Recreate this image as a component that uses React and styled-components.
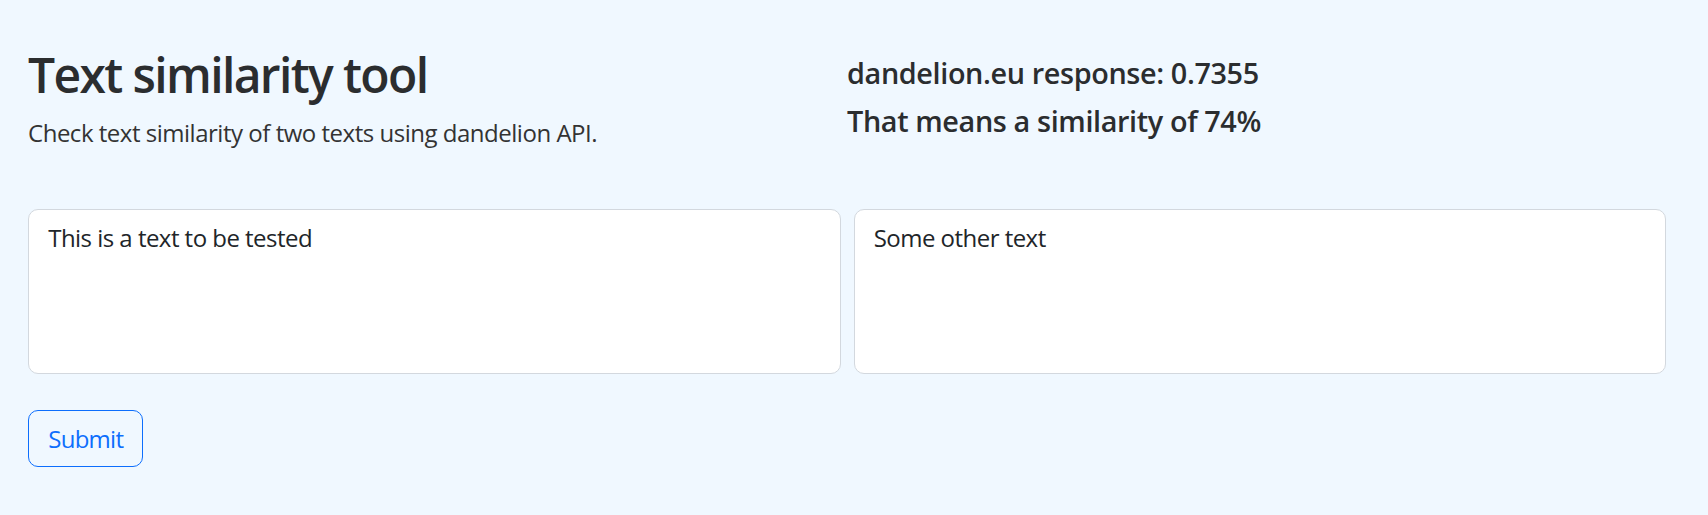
import React from "react";
import styled, { createGlobalStyle } from "styled-components";

const Global = createGlobalStyle`
  html, body { margin: 0; padding: 0; }
  body {
    background: #f0f8ff;
    color: #212529;
    font-family: "Open Sans", "Noto Sans", sans-serif;
  }
`;

const Page = styled.main`
  padding: 45px 42px 40px 28px;
`;

const Header = styled.header`
  display: grid;
  grid-template-columns: 1fr 1fr;
`;

const Title = styled.h1`
  margin: 1px 0 11px;
  font-size: 48px;
  line-height: 1.2;
  font-weight: 600;
  letter-spacing: -0.034em;
  color: #2b2d2f;
`;

const Lead = styled.p`
  margin: 0;
  font-size: 24px;
  line-height: 1.5;
  font-weight: 400;
  letter-spacing: -0.02em;
  color: #333;
`;

const Results = styled.div`
  padding-top: 11px;
`;

const ResultLine = styled.h4`
  margin: 0 0 13px;
  font-size: 28.8px;
  line-height: 1.2;
  font-weight: 600;
  letter-spacing: -0.013em;
  color: #2b2d2f;
`;

const Fields = styled.div`
  margin-top: 58px;
  display: grid;
  grid-template-columns: 1fr 1fr;
  gap: 13px;
`;

const Area = styled.textarea`
  box-sizing: border-box;
  width: 100%;
  height: 165px;
  margin: 0;
  padding: 9.6px 19.2px;
  font-family: inherit;
  font-size: 24px;
  line-height: 1.5;
  letter-spacing: -0.022em;
  color: #212529;
  background: #fff;
  border: 1px solid #d3d8de;
  border-radius: 10px;
  resize: none;
  outline: none;
`;

const Button = styled.button`
  margin-top: 36px;
  padding: 9.6px 19.2px;
  font-family: inherit;
  font-size: 24px;
  line-height: 1.5;
  letter-spacing: -0.03em;
  color: #0d6efd;
  background: transparent;
  border: 1px solid #0d6efd;
  border-radius: 10px;
  cursor: pointer;
`;

export default function App() {
  return (
    <>
      <Global />
      <Page>
        <Header>
          <div>
            <Title>Text similarity tool</Title>
            <Lead>Check text similarity of two texts using dandelion API.</Lead>
          </div>
          <Results>
            <ResultLine>dandelion.eu response: 0.7355</ResultLine>
            <ResultLine>That means a similarity of 74%</ResultLine>
          </Results>
        </Header>
        <Fields>
          <Area defaultValue="This is a text to be tested" />
          <Area defaultValue="Some other text" />
        </Fields>
        <Button type="button">Submit</Button>
      </Page>
    </>
  );
}
